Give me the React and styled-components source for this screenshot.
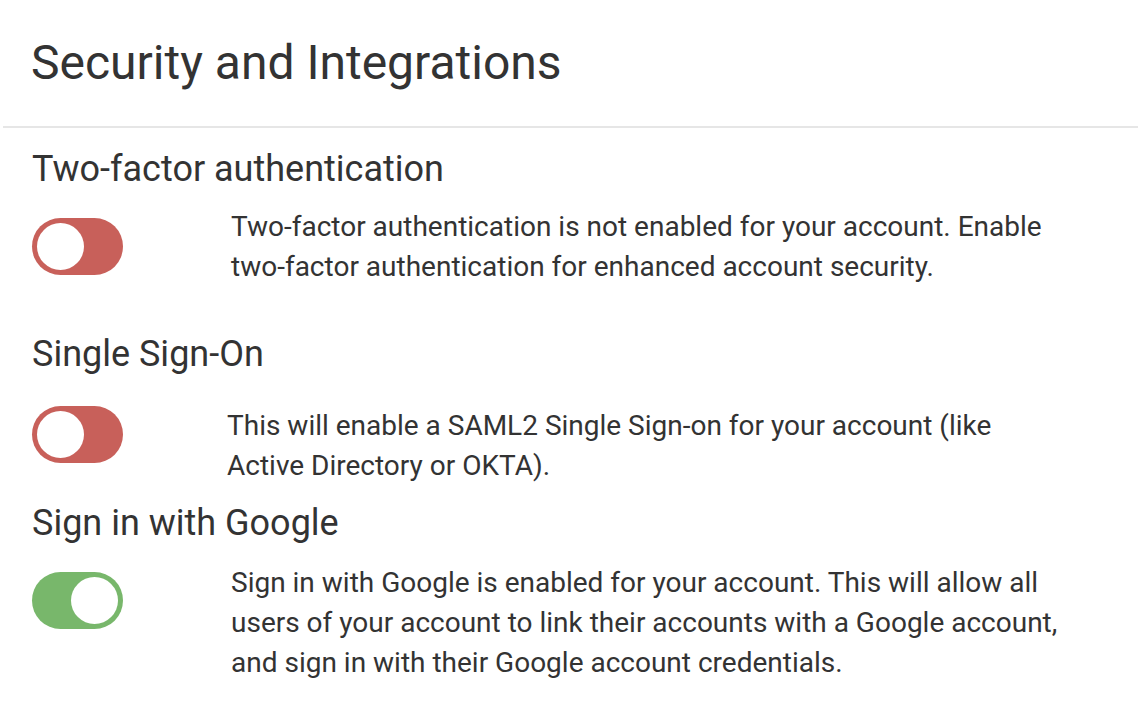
import React from 'react'
import styled, { createGlobalStyle } from 'styled-components'

const Global = createGlobalStyle`
  html, body {
    margin: 0;
    padding: 0;
    background: #fff;
  }
  body {
    font-family: Roboto, "Liberation Sans", Arial, sans-serif;
    color: #333;
  }
`

const Page = styled.div`
  width: 1140px;
`

const Header = styled.header`
  margin: 0 2px 0 3px;
  padding: 35px 0 35px 28px;
  border-bottom: 2px solid #e6e6e6;
`

const Title = styled.h1`
  margin: 0;
  font-size: 48px;
  font-weight: 400;
  line-height: 56px;
  color: #333;
`

const Content = styled.div`
  padding: 19px 32px 0 32px;
`

const Section = styled.section`
  margin-bottom: ${p => p.spacing}px;
`

const Heading = styled.h2`
  margin: 0;
  font-size: 36px;
  font-weight: 400;
  line-height: 44px;
  color: #333;
`

const Row = styled.div`
  display: flex;
  align-items: flex-start;
  margin-top: ${p => p.gap}px;
`

const Switch = styled.button`
  position: relative;
  flex-shrink: 0;
  width: 91px;
  height: 57px;
  padding: 0;
  border: none;
  border-radius: 29px;
  background: ${p => (p.on ? '#78b76b' : '#c8605a')};
  cursor: pointer;

  &::after {
    content: '';
    position: absolute;
    top: 5px;
    left: ${p => (p.on ? '39px' : '5px')};
    width: 47px;
    height: 47px;
    border-radius: 50%;
    background: #fff;
  }
`

const Description = styled.p`
  margin: -${p => p.lift}px 0 0 ${p => p.indent}px;
  max-width: 840px;
  font-size: 28px;
  line-height: 40px;
  color: #333;
`

const sections = [
  {
    title: 'Two-factor authentication',
    on: false,
    text: 'Two-factor authentication is not enabled for your account. Enable two-factor authentication for enhanced account security.',
    gap: 27,
    lift: 11,
    indent: 108,
    spacing: 45,
  },
  {
    title: 'Single Sign-On',
    on: false,
    text: 'This will enable a SAML2 Single Sign-on for your account (like Active Directory or OKTA).',
    gap: 30,
    lift: 0,
    indent: 104,
    spacing: 15,
  },
  {
    title: 'Sign in with Google',
    on: true,
    text: 'Sign in with Google is enabled for your account. This will allow all users of your account to link their accounts with a Google account, and sign in with their Google account credentials.',
    gap: 27,
    lift: 9,
    indent: 108,
    spacing: 0,
  },
]

export default function App() {
  return (
    <Page>
      <Global />
      <Header>
        <Title>Security and Integrations</Title>
      </Header>
      <Content>
        {sections.map(s => (
          <Section key={s.title} spacing={s.spacing}>
            <Heading>{s.title}</Heading>
            <Row gap={s.gap}>
              <Switch on={s.on} aria-label={s.title} />
              <Description lift={s.lift} indent={s.indent}>{s.text}</Description>
            </Row>
          </Section>
        ))}
      </Content>
    </Page>
  )
}
